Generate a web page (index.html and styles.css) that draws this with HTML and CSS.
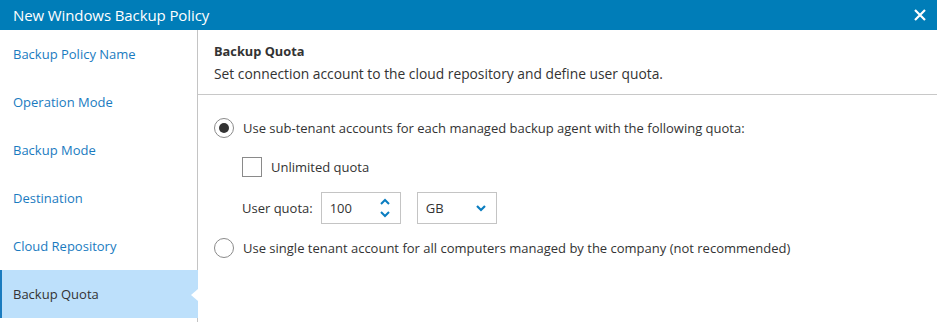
FILE: index.html
```html
<!DOCTYPE html>
<html>
<head>
<meta charset="utf-8">
<link rel="stylesheet" href="styles.css">
</head>
<body>
<div class="dialog">
  <div class="titlebar">
    <span class="title">New Windows Backup Policy</span>
    <svg class="close" width="14" height="14" viewBox="0 0 14 14"><path d="M2 2 L12 12 M12 2 L2 12" stroke="#fff" stroke-width="2.2" fill="none"/></svg>
  </div>
  <div class="body">
    <nav class="sidebar">
      <div class="nav-item">Backup Policy Name</div>
      <div class="nav-item">Operation Mode</div>
      <div class="nav-item">Backup Mode</div>
      <div class="nav-item">Destination</div>
      <div class="nav-item">Cloud Repository</div>
      <div class="nav-item active">Backup Quota<span class="notch"></span></div>
    </nav>
    <main class="content">
      <header class="head">
        <div class="head-title">Backup Quota</div>
        <div class="head-sub">Set connection account to the cloud repository and define user quota.</div>
      </header>
      <section class="form">
        <label class="radio-row">
          <span class="radio checked"></span>
          <span>Use sub-tenant accounts for each managed backup agent with the following quota:</span>
        </label>
        <div class="sub">
          <label class="check-row">
            <span class="checkbox"></span>
            <span>Unlimited quota</span>
          </label>
          <div class="quota-row">
            <span class="quota-label">User quota:</span>
            <div class="field num">
              <span>100</span>
              <svg class="spin" width="12" height="22" viewBox="0 0 12 22"><path d="M2 7 L6 3 L10 7" stroke="#0a7dc0" stroke-width="2" fill="none"/><path d="M2 15 L6 19 L10 15" stroke="#0a7dc0" stroke-width="2" fill="none"/></svg>
            </div>
            <div class="field sel">
              <span>GB</span>
              <svg class="chev" width="12" height="8" viewBox="0 0 12 8"><path d="M2 2 L6 6 L10 2" stroke="#0a7dc0" stroke-width="2.2" fill="none"/></svg>
            </div>
          </div>
        </div>
        <label class="radio-row">
          <span class="radio"></span>
          <span>Use single tenant account for all computers managed by the company (not recommended)</span>
        </label>
      </section>
    </main>
  </div>
</div>
</body>
</html>
```

FILE: styles.css
```css
* { box-sizing: border-box; }
html, body { margin: 0; padding: 0; }
body {
  width: 937px;
  height: 322px;
  overflow: hidden;
  background: #fff;
  font-family: "Open Sans", "Liberation Sans", sans-serif;
  font-size: 13px;
  color: #333;
}
.dialog { display: flex; flex-direction: column; height: 322px; }
.titlebar {
  height: 30px;
  background: #007db8;
  color: #fff;
  display: flex;
  align-items: center;
  justify-content: space-between;
  padding: 0 10px 0 13px;
  flex-shrink: 0;
}
.title { font-size: 15px; letter-spacing: -0.1px; }
.close { display: block; }
.body { flex: 1; display: flex; }
.sidebar {
  width: 198px;
  border-right: 1px solid #c4c4c4;
  padding-top: 0;
  flex-shrink: 0;
}
.nav-item {
  height: 48px;
  line-height: 48px;
  padding-left: 13px;
  color: #1a7bbf;
  position: relative;
}
.nav-item.active {
  background: #bde0fb;
  color: #333;
  border-left: 2px solid #1a7bbf;
  padding-left: 11px;
  margin-right: -1px;
}
.notch {
  position: absolute;
  right: 0;
  top: 19px;
  width: 0;
  height: 0;
  border-top: 6px solid transparent;
  border-bottom: 6px solid transparent;
  border-right: 7px solid #fff;
}
.content { flex: 1; display: flex; flex-direction: column; }
.head {
  padding: 12px 16px 0;
  height: 65px;
  border-bottom: 1px solid #c8c8c8;
}
.head-title { font-weight: bold; font-size: 12.8px; line-height: 19px; }
.head-sub { margin-top: 3px; font-size: 13.8px; line-height: 19px; }
.form { padding: 23px 16px 0; }
.radio-row { display: flex; align-items: center; height: 20px; }
.radio {
  width: 20px;
  height: 20px;
  border-radius: 50%;
  border: 1px solid #8a8a8a;
  margin-right: 9px;
  position: relative;
  flex-shrink: 0;
}
.radio.checked::after {
  content: "";
  position: absolute;
  left: 4px;
  top: 4px;
  width: 10px;
  height: 10px;
  border-radius: 50%;
  background: #333;
}
.sub { padding-left: 28px; padding-top: 19px; padding-bottom: 14px; }
.check-row { display: flex; align-items: center; height: 20px; }
.checkbox {
  width: 20px;
  height: 20px;
  border: 1px solid #8a8a8a;
  margin-right: 9px;
}
.quota-row { display: flex; align-items: center; margin-top: 15px; height: 32px; }
.quota-label { margin-right: 8px; }
.field {
  height: 32px;
  width: 80px;
  border: 1px solid #c4c4c4;
  display: flex;
  align-items: center;
  justify-content: space-between;
}
.num { padding: 0 9px 0 8px; }
.sel { margin-left: 16px; padding: 0 9px 0 8px; }
.spin, .chev { display: block; }
```
